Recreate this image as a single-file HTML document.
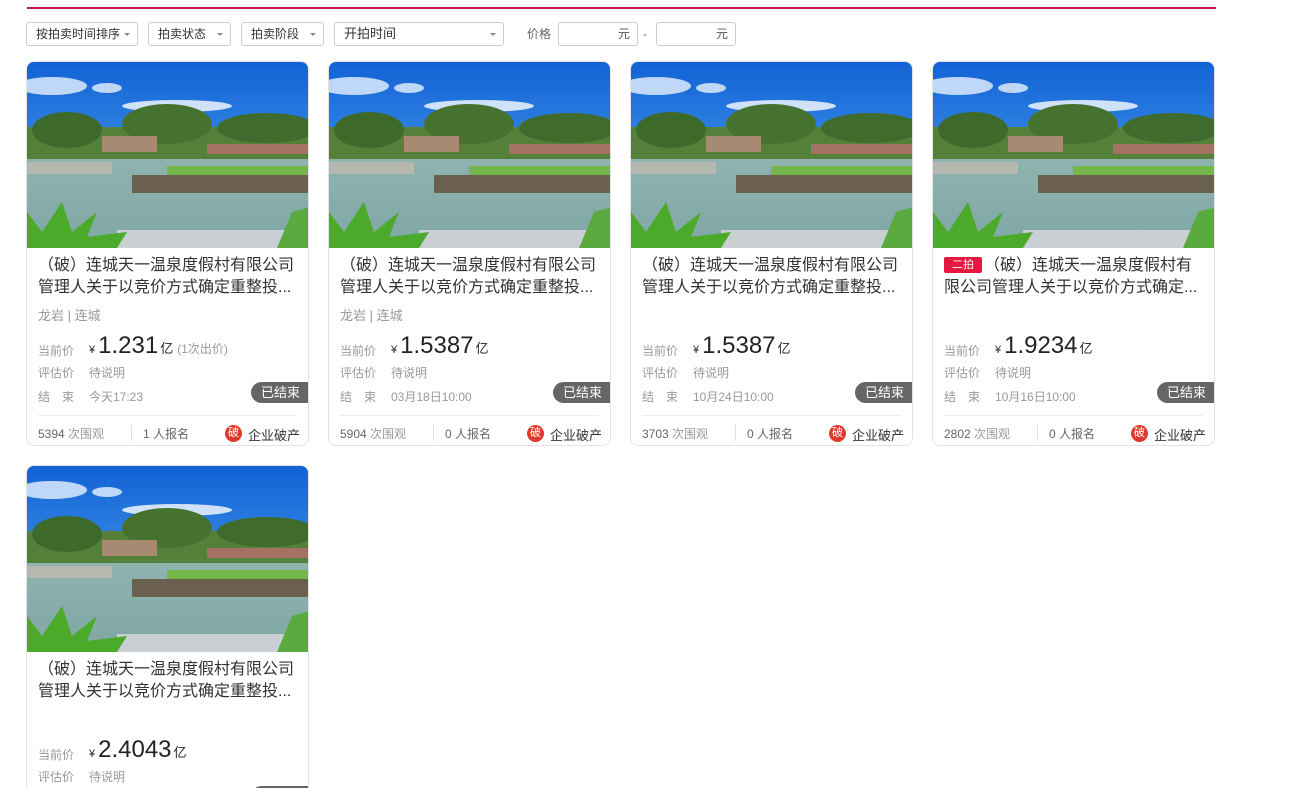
<!DOCTYPE html>
<html><head><meta charset="utf-8"><style>
*{margin:0;padding:0;box-sizing:border-box}
html,body{width:1291px;height:788px;overflow:hidden}
body{background:#fff;font-family:"Liberation Sans","Noto Sans CJK SC",sans-serif;color:#333;position:relative}
.topline{position:absolute;left:27px;top:7px;width:1189px;height:2px;background:#c8174a}
.sel{position:absolute;top:22px;height:24px;border:1px solid #ccc;border-radius:3px;font-size:12px;line-height:22px;padding-left:9px;color:#333}
.sel:after{content:"";position:absolute;right:7px;top:10px;border:3px solid transparent;border-top:3px solid #888}
.lbl{position:absolute;top:22px;font-size:12px;line-height:24px;color:#666}
.inp{position:absolute;top:22px;height:24px;width:80px;border:1px solid #ccc;border-radius:3px;font-size:12px;line-height:22px;text-align:right;padding-right:7px;color:#555}
.card{position:absolute;width:283px;height:385px;border:1px solid #e4e4e4;border-radius:8px;overflow:hidden;background:#fff}
.card svg{position:absolute;left:0;top:0}
.t{position:absolute;left:11px;top:193px;width:270px;font-size:16px;line-height:22px;color:#333;white-space:nowrap}
.badge{display:inline-block;background:#e6183f;color:#fff;font-size:11px;line-height:16px;padding:0 8px;border-radius:2px;vertical-align:2px;margin-right:2px}
.loc{position:absolute;left:11px;top:243px;font-size:13px;color:#999}
.r{position:absolute;left:11px;font-size:12px;color:#999}
.r b{font-weight:normal;display:inline-block;width:51px}
.pr{position:absolute;left:62px;top:270px;color:#222;white-space:nowrap}
.pr i{font-style:normal;font-size:11px;margin-right:3px}
.pr span{font-size:24px}
.pr em{font-style:normal;font-size:13px;margin-left:2px}
.pr s{text-decoration:none;font-size:12px;color:#999;margin-left:4px}
.end{position:absolute;right:0;top:320px;background:#666;color:#fff;font-size:13px;line-height:21px;padding:0 8px 0 10px;border-radius:11px 0 0 11px}
.hr{position:absolute;left:11px;right:11px;top:353px;height:1px;background:#eee}
.f{position:absolute;top:363px;font-size:12px;color:#666}
.sep{position:absolute;left:104px;top:363px;width:1px;height:16px;background:#e0e0e0}
.po{position:absolute;left:198px;top:363px;width:17px;height:17px;border-radius:50%;background:#e03a2e;color:#fff;font-size:11px;line-height:17px;text-align:center}
.cat{position:absolute;left:221px;top:363px;font-size:13px;color:#333}
</style></head><body>
<div class="topline"></div>
<div class="sel" style="left:26px;width:112px">按拍卖时间排序</div>
<div class="sel" style="left:148px;width:83px">拍卖状态</div>
<div class="sel" style="left:241px;width:83px">拍卖阶段</div>
<div class="sel" style="left:334px;width:170px;font-size:13px">开拍时间</div>
<div class="lbl" style="left:527px">价格</div>
<div class="inp" style="left:558px">元</div>
<div class="lbl" style="left:643px">-</div>
<div class="inp" style="left:656px">元</div>

<svg width="0" height="0" style="position:absolute">
<defs>
<linearGradient id="sky" x1="0" y1="0" x2="0" y2="1"><stop offset="0" stop-color="#1262d6"/><stop offset="1" stop-color="#5bb0f0"/></linearGradient>
<linearGradient id="wat" x1="0" y1="0" x2="0" y2="1"><stop offset="0" stop-color="#8fb3ae"/><stop offset="1" stop-color="#7fa6a6"/></linearGradient>
<g id="img">
<rect width="283" height="186" fill="url(#sky)"/>
<ellipse cx="25" cy="24" rx="35" ry="9" fill="#e8f2ff" opacity=".8"/>
<ellipse cx="80" cy="26" rx="15" ry="5" fill="#e8f2ff" opacity=".8"/>
<ellipse cx="150" cy="44" rx="55" ry="6" fill="#eef5ff" opacity=".85"/>
<rect y="65" width="283" height="35" fill="#54803a"/>
<ellipse cx="40" cy="68" rx="35" ry="18" fill="#3d6a2a"/>
<ellipse cx="140" cy="62" rx="45" ry="20" fill="#46722f"/>
<ellipse cx="240" cy="66" rx="50" ry="15" fill="#3f6c2c"/>
<rect x="75" y="74" width="55" height="16" fill="#a88a72"/>
<rect x="180" y="82" width="103" height="10" fill="#a47262"/>
<rect y="97" width="283" height="89" fill="url(#wat)"/>
<rect x="140" y="104" width="143" height="12" fill="#74b64a"/>
<rect x="105" y="113" width="178" height="18" fill="#6b6050"/>
<rect x="0" y="100" width="85" height="12" fill="#b4b8ae"/>
<rect x="90" y="168" width="200" height="18" fill="#c9cfd2"/>
<path d="M0 186 L0 150 L15 170 L35 140 L45 170 L70 150 L60 175 L100 170 L90 186Z" fill="#4caa2a"/>
<path d="M250 186 L265 150 L283 145 L283 186Z" fill="#5aaa40"/>
</g>
</defs></svg>

<div class="card" style="left:26px;top:61px">
<svg width="283" height="186"><use href="#img"/></svg>
<div class="t">（破）连城天一温泉度假村有限公司<br>管理人关于以竞价方式确定重整投...</div>
<div class="loc">龙岩 | 连城</div>
<div class="r" style="top:280px"><b>当前价</b></div>
<div class="pr"><i>¥</i><span>1.231</span><em>亿</em><s>(1次出价)</s></div>
<div class="r" style="top:302px"><b>评估价</b>待说明</div>
<div class="r" style="top:326px"><b>结　束</b>今天17:23</div>
<div class="end">已结束</div><div class="hr"></div>
<div class="f" style="left:11px">5394 <span style="color:#999">次围观</span></div><div class="sep"></div>
<div class="f" style="left:116px">1 人报名</div><div class="po">破</div><div class="cat">企业破产</div>
</div>

<div class="card" style="left:328px;top:61px">
<svg width="283" height="186"><use href="#img"/></svg>
<div class="t">（破）连城天一温泉度假村有限公司<br>管理人关于以竞价方式确定重整投...</div>
<div class="loc">龙岩 | 连城</div>
<div class="r" style="top:280px"><b>当前价</b></div>
<div class="pr"><i>¥</i><span>1.5387</span><em>亿</em></div>
<div class="r" style="top:302px"><b>评估价</b>待说明</div>
<div class="r" style="top:326px"><b>结　束</b>03月18日10:00</div>
<div class="end">已结束</div><div class="hr"></div>
<div class="f" style="left:11px">5904 <span style="color:#999">次围观</span></div><div class="sep"></div>
<div class="f" style="left:116px">0 人报名</div><div class="po">破</div><div class="cat">企业破产</div>
</div>

<div class="card" style="left:630px;top:61px">
<svg width="283" height="186"><use href="#img"/></svg>
<div class="t">（破）连城天一温泉度假村有限公司<br>管理人关于以竞价方式确定重整投...</div>
<div class="r" style="top:280px"><b>当前价</b></div>
<div class="pr"><i>¥</i><span>1.5387</span><em>亿</em></div>
<div class="r" style="top:302px"><b>评估价</b>待说明</div>
<div class="r" style="top:326px"><b>结　束</b>10月24日10:00</div>
<div class="end">已结束</div><div class="hr"></div>
<div class="f" style="left:11px">3703 <span style="color:#999">次围观</span></div><div class="sep"></div>
<div class="f" style="left:116px">0 人报名</div><div class="po">破</div><div class="cat">企业破产</div>
</div>

<div class="card" style="left:932px;top:61px">
<svg width="283" height="186"><use href="#img"/></svg>
<div class="t"><span class="badge">二拍</span>（破）连城天一温泉度假村有<br>限公司管理人关于以竞价方式确定...</div>
<div class="r" style="top:280px"><b>当前价</b></div>
<div class="pr"><i>¥</i><span>1.9234</span><em>亿</em></div>
<div class="r" style="top:302px"><b>评估价</b>待说明</div>
<div class="r" style="top:326px"><b>结　束</b>10月16日10:00</div>
<div class="end">已结束</div><div class="hr"></div>
<div class="f" style="left:11px">2802 <span style="color:#999">次围观</span></div><div class="sep"></div>
<div class="f" style="left:116px">0 人报名</div><div class="po">破</div><div class="cat">企业破产</div>
</div>

<div class="card" style="left:26px;top:465px;height:323px;border-bottom:none;border-radius:8px 8px 0 0">
<svg width="283" height="186"><use href="#img"/></svg>
<div class="t">（破）连城天一温泉度假村有限公司<br>管理人关于以竞价方式确定重整投...</div>
<div class="r" style="top:280px"><b>当前价</b></div>
<div class="pr"><i>¥</i><span>2.4043</span><em>亿</em></div>
<div class="r" style="top:302px"><b>评估价</b>待说明</div>
<div class="end">已结束</div>
</div>
</body></html>
